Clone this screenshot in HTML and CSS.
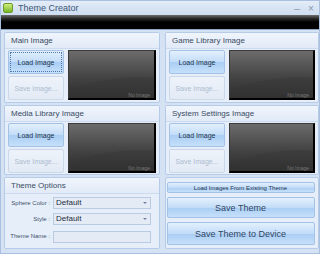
FILE: index.html
```html
<!DOCTYPE html>
<html lang="en">

<head>
    <meta charset="UTF-8">
    <title>Theme Creator</title>
    <link rel="stylesheet" href="styles.css">
</head>

<body>
    <div class="window">
        <div class="titlebar">
            <span class="app-icon"></span>
            <span class="title">Theme Creator</span>
            <span class="win-btn">&#8211;</span>
            <span class="win-btn close">&#215;</span>
        </div>
        <div class="ribbon"></div>
        <div class="content">
            <div class="panel">
                <div class="panel-head">Main Image</div>
                <div class="panel-body">
                    <div class="btn-col">
                        <button class="btn load focused">Load Image</button>
                        <button class="btn save" disabled>Save Image...</button>
                    </div>
                    <div class="preview"><span>No Image</span></div>
                </div>
            </div>
            <div class="panel">
                <div class="panel-head">Game Library Image</div>
                <div class="panel-body">
                    <div class="btn-col">
                        <button class="btn load">Load Image</button>
                        <button class="btn save" disabled>Save Image...</button>
                    </div>
                    <div class="preview"><span>No Image</span></div>
                </div>
            </div>
            <div class="panel">
                <div class="panel-head">Media Library Image</div>
                <div class="panel-body">
                    <div class="btn-col">
                        <button class="btn load">Load Image</button>
                        <button class="btn save" disabled>Save Image...</button>
                    </div>
                    <div class="preview"><span>No Image</span></div>
                </div>
            </div>
            <div class="panel">
                <div class="panel-head">System Settings Image</div>
                <div class="panel-body">
                    <div class="btn-col">
                        <button class="btn load">Load Image</button>
                        <button class="btn save" disabled>Save Image...</button>
                    </div>
                    <div class="preview"><span>No Image</span></div>
                </div>
            </div>
            <div class="panel">
                <div class="panel-head">Theme Options</div>
                <div class="options">
                    <label>Sphere Color :</label>
                    <div class="select">Default<span class="arrow"></span></div>
                    <label>Style :</label>
                    <div class="select">Default<span class="arrow"></span></div>
                    <label>Theme Name :</label>
                    <div class="select empty"></div>
                </div>
            </div>
            <div class="panel actions">
                <button class="btn small">Load Images From Existing Theme</button>
                <button class="btn big">Save Theme</button>
                <button class="btn big tall">Save Theme to Device</button>
            </div>
        </div>
    </div>
</body>

</html>
```

FILE: styles.css
```css
body {
    margin: 0;
    font-family: "Liberation Sans", Arial, sans-serif;
    background-color: #c9daf0;
}

.window {
    width: 320px;
    height: 254px;
    box-sizing: border-box;
    border: 1px solid #a9c0de;
    background-color: #d4e2f4;
    display: flex;
    flex-direction: column;
    overflow: hidden;
}

.titlebar {
    height: 14px;
    display: flex;
    align-items: center;
    background: linear-gradient(#e4edf8, #cddcf0);
    color: #3d5575;
    font-size: 9px;
}

.app-icon {
    width: 8px;
    height: 8px;
    margin: 0 5px 0 2px;
    border-radius: 2px;
    background: linear-gradient(#cdee7c, #7ab62a);
    border: 1px solid #6a9a2a;
}

.title {
    flex-grow: 1;
}

.win-btn {
    width: 14px;
    text-align: center;
    color: #8a98aa;
    font-size: 10px;
}

.close {
    margin-right: 1px;
}

.ribbon {
    height: 14px;
    background: linear-gradient(#6e6e6e, #2a2a2a 25%, #000 50%, #000);
    border-bottom: 1px solid #8fa6c4;
}

.content {
    flex-grow: 1;
    display: grid;
    grid-template-columns: 156px 154px;
    grid-template-rows: 71px 70px 72px;
    column-gap: 5px;
    row-gap: 2px;
    padding: 2px 3px 0 3px;
}

.panel {
    border: 1px solid #b5cbe7;
    border-radius: 2px;
    background-color: #e6eef9;
    display: flex;
    flex-direction: column;
}

.panel-head {
    height: 15px;
    line-height: 15px;
    padding-left: 6px;
    font-size: 8px;
    color: #3a4b62;
    background: linear-gradient(#f0f5fc, #e1eaf7);
    border-bottom: 1px solid #cbdaee;
}

.panel-body {
    display: flex;
    gap: 4px;
    padding: 1px 3px 0 3px;
}

.btn-col {
    display: flex;
    flex-direction: column;
    gap: 2px;
}

.btn {
    font-family: "Liberation Sans", Arial, sans-serif;
    font-size: 7px;
    color: #23344c;
    border: 1px solid #a3c2e6;
    border-radius: 2px;
    padding: 0;
    background: linear-gradient(#e3f0fd, #c2dcf8 50%, #a9cdf4 51%, #c6e0fa);
}

.load {
    width: 56px;
    height: 24px;
}

.focused {
    outline: 1px dotted #4c76aa;
    outline-offset: -3px;
}

.save {
    width: 56px;
    height: 24px;
    color: #aebcd0;
    background: linear-gradient(#eef3fa, #e2eaf5);
    border-color: #cad8ea;
}

.preview {
    flex-grow: 1;
    height: 50px;
    position: relative;
    overflow: hidden;
    background: linear-gradient(#6c6c6c, #474747 50%, #2c2c2c);
    border: 1px solid #3a3a3a;
    border-right: 2px solid #000;
    border-bottom: 2px solid #000;
    box-sizing: border-box;
}

.preview::before {
    content: "";
    position: absolute;
    left: -40px;
    top: 26px;
    width: 220px;
    height: 120px;
    border-radius: 50%;
    background: linear-gradient(#3e3e3e, #202020 40%);
}

.preview span {
    position: absolute;
    right: 4px;
    bottom: 0;
    font-size: 5px;
    color: #777;
}

.options {
    display: grid;
    grid-template-columns: 45px 98px;
    column-gap: 3px;
    row-gap: 4px;
    padding: 3px 0 0 0;
    align-items: center;
}

.options label {
    font-size: 6px;
    color: #3e516c;
    text-align: right;
}

.select {
    height: 12px;
    box-sizing: border-box;
    border: 1px solid #b9cbe2;
    background-color: #e4ebf5;
    font-size: 8px;
    line-height: 10px;
    padding-left: 2px;
    color: #1f2c3e;
    position: relative;
}

.empty {
    margin-top: 2px;
}

.arrow {
    position: absolute;
    right: 3px;
    top: 4px;
    border-left: 2px solid transparent;
    border-right: 2px solid transparent;
    border-top: 2px solid #6e84a6;
}

.actions {
    padding: 4px 3px 0 0;
    align-items: center;
    gap: 4px;
}

.small {
    width: 148px;
    height: 11px;
    font-size: 6px;
}

.big {
    width: 148px;
    height: 21px;
    font-size: 9px;
    color: #2f4565;
}

.tall {
    height: 23px;
}
```
